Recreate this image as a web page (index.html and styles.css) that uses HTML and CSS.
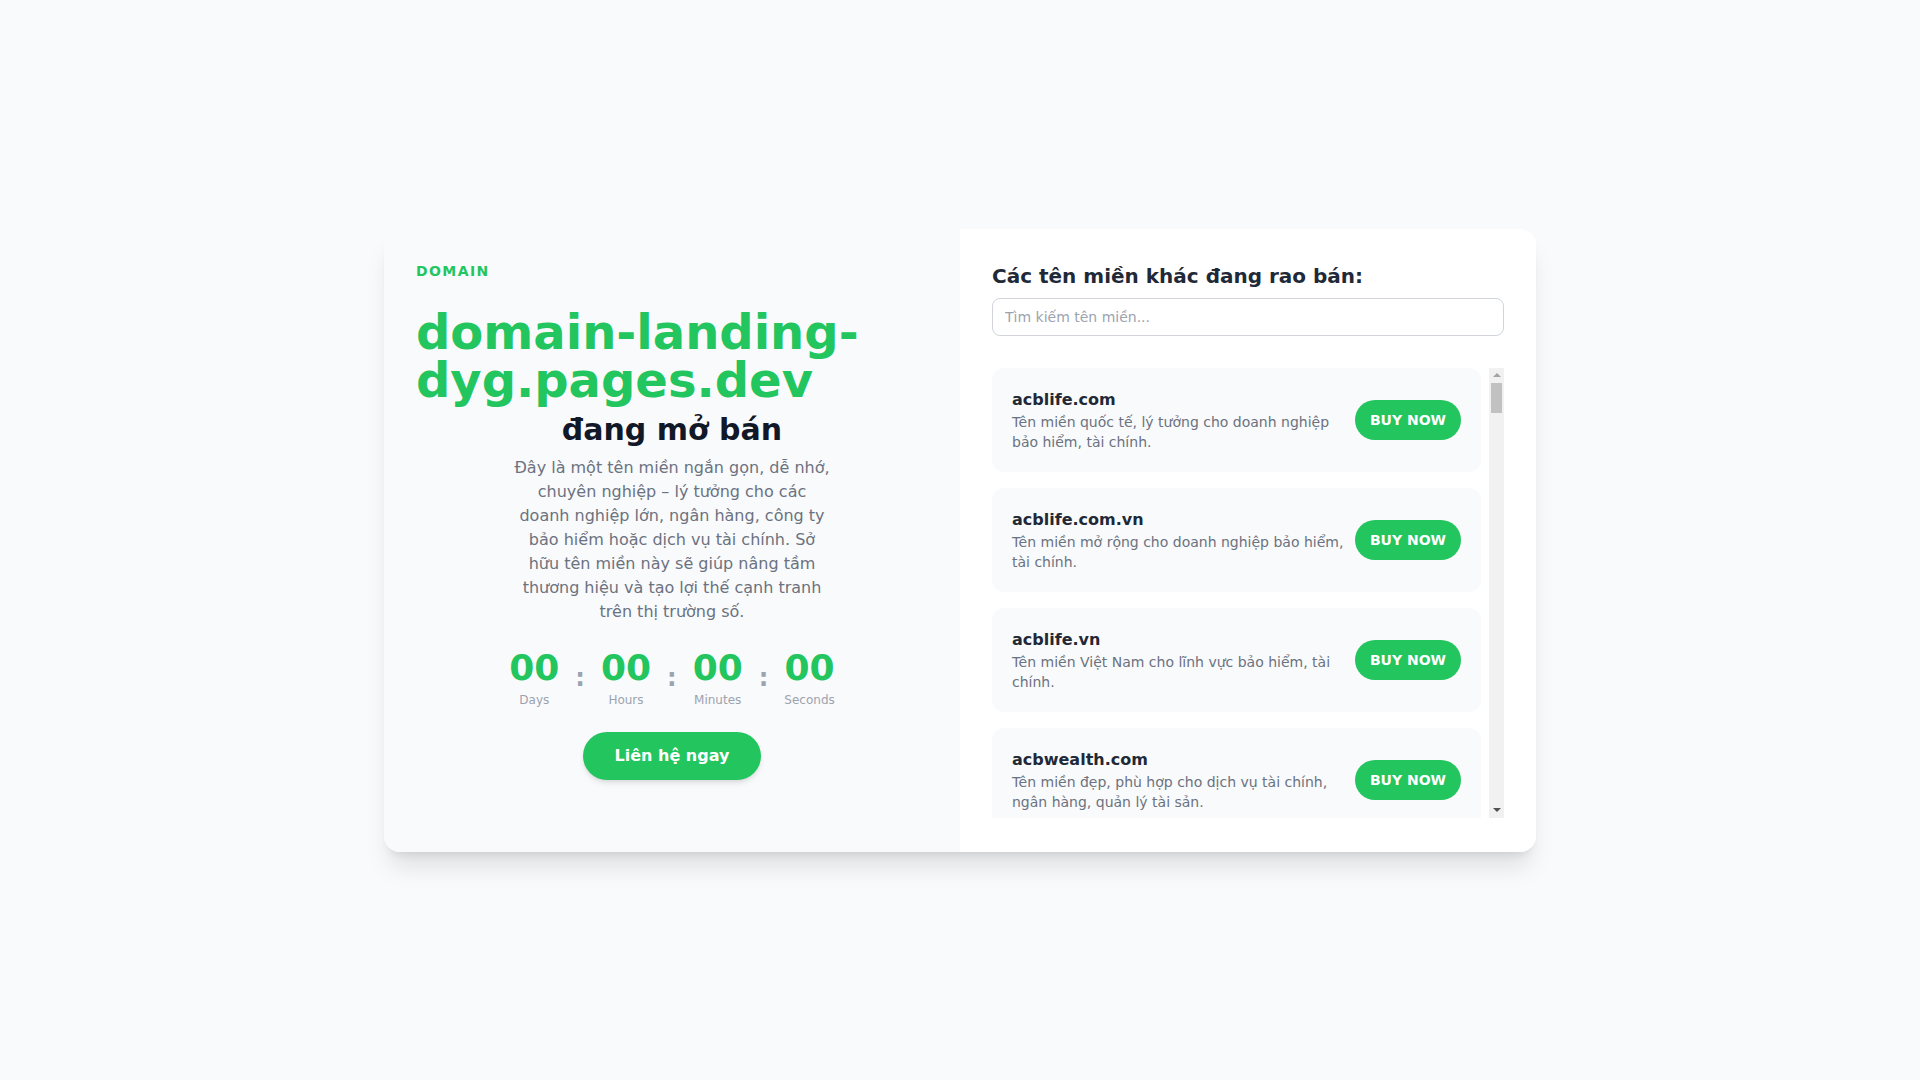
FILE: index.html
```html
<!DOCTYPE html>
<html lang="vi">
<head>
<meta charset="utf-8">
<title>domain-landing-dyg.pages.dev đang mở bán</title>
<link rel="stylesheet" href="styles.css">
</head>
<body>
<main class="card">
  <section class="intro">
    <div class="eyebrow">DOMAIN</div>
    <h1 class="domain-title">domain-landing-dyg.pages.dev</h1>
    <h2 class="subtitle">đang mở bán</h2>
    <p class="lead">Đây là một tên miền ngắn gọn, dễ nhớ, chuyên nghiệp – lý tưởng cho các doanh nghiệp lớn, ngân hàng, công ty bảo hiểm hoặc dịch vụ tài chính. Sở hữu tên miền này sẽ giúp nâng tầm thương hiệu và tạo lợi thế cạnh tranh trên thị trường số.</p>
    <div class="countdown">
      <div class="unit"><span class="num">00</span><span class="lbl">Days</span></div>
      <span class="sep">:</span>
      <div class="unit"><span class="num">00</span><span class="lbl">Hours</span></div>
      <span class="sep">:</span>
      <div class="unit"><span class="num">00</span><span class="lbl">Minutes</span></div>
      <span class="sep">:</span>
      <div class="unit"><span class="num">00</span><span class="lbl">Seconds</span></div>
    </div>
    <a class="contact-btn" href="#">Liên hệ ngay</a>
  </section>
  <section class="market">
    <h3 class="market-title">Các tên miền khác đang rao bán:</h3>
    <input class="search" type="text" placeholder="Tìm kiếm tên miền...">
    <div class="list-wrap">
      <div class="list">
        <div class="item"><div class="info"><div class="name">acblife.com</div><div class="desc">Tên miền quốc tế, lý tưởng cho doanh nghiệp bảo hiểm, tài chính.</div></div><a class="buy" href="#">BUY NOW</a></div>
        <div class="item"><div class="info"><div class="name">acblife.com.vn</div><div class="desc">Tên miền mở rộng cho doanh nghiệp bảo hiểm, tài chính.</div></div><a class="buy" href="#">BUY NOW</a></div>
        <div class="item"><div class="info"><div class="name">acblife.vn</div><div class="desc">Tên miền Việt Nam cho lĩnh vực bảo hiểm, tài chính.</div></div><a class="buy" href="#">BUY NOW</a></div>
        <div class="item"><div class="info"><div class="name">acbwealth.com</div><div class="desc">Tên miền đẹp, phù hợp cho dịch vụ tài chính, ngân hàng, quản lý tài sản.</div></div><a class="buy" href="#">BUY NOW</a></div>
        <div class="item"><div class="info"><div class="name">acbwealth.vn</div><div class="desc">Tên miền Việt Nam cho dịch vụ quản lý tài sản và đầu tư.</div></div><a class="buy" href="#">BUY NOW</a></div>
        <div class="item"><div class="info"><div class="name">acbwealth.com.vn</div><div class="desc">Tên miền mở rộng cho dịch vụ quản lý tài sản, ngân hàng.</div></div><a class="buy" href="#">BUY NOW</a></div>
        <div class="item"><div class="info"><div class="name">acbinsurance.com</div><div class="desc">Tên miền quốc tế cho doanh nghiệp bảo hiểm và tài chính.</div></div><a class="buy" href="#">BUY NOW</a></div>
        <div class="item"><div class="info"><div class="name">acbinsurance.vn</div><div class="desc">Tên miền Việt Nam cho công ty bảo hiểm nhân thọ, phi nhân thọ.</div></div><a class="buy" href="#">BUY NOW</a></div>
        <div class="item"><div class="info"><div class="name">acbcapital.com</div><div class="desc">Tên miền quốc tế cho quỹ đầu tư, công ty quản lý vốn.</div></div><a class="buy" href="#">BUY NOW</a></div>
        <div class="item"><div class="info"><div class="name">acbcapital.vn</div><div class="desc">Tên miền Việt Nam cho lĩnh vực đầu tư và quản lý vốn.</div></div><a class="buy" href="#">BUY NOW</a></div>
        <div class="item"><div class="info"><div class="name">acbinvest.com</div><div class="desc">Tên miền quốc tế cho nền tảng đầu tư, chứng khoán.</div></div><a class="buy" href="#">BUY NOW</a></div>
        <div class="item"><div class="info"><div class="name">acbinvest.vn</div><div class="desc">Tên miền Việt Nam cho dịch vụ đầu tư, tư vấn tài chính.</div></div><a class="buy" href="#">BUY NOW</a></div>
        <div class="item"><div class="info"><div class="name">acbfinance.com</div><div class="desc">Tên miền quốc tế cho công ty tài chính, cho vay tiêu dùng.</div></div><a class="buy" href="#">BUY NOW</a></div>
        <div class="item"><div class="info"><div class="name">acbfinance.vn</div><div class="desc">Tên miền Việt Nam cho lĩnh vực tài chính, tín dụng cá nhân.</div></div><a class="buy" href="#">BUY NOW</a></div>
        <div class="item"><div class="info"><div class="name">acbpay.vn</div><div class="desc">Tên miền ngắn gọn cho ví điện tử, cổng thanh toán trực tuyến.</div></div><a class="buy" href="#">BUY NOW</a></div>
        <div class="item"><div class="info"><div class="name">acbpay.com.vn</div><div class="desc">Tên miền mở rộng cho dịch vụ thanh toán, chuyển tiền số.</div></div><a class="buy" href="#">BUY NOW</a></div>
        <div class="item"><div class="info"><div class="name">acbbank.net</div><div class="desc">Tên miền quốc tế cho ngân hàng số, dịch vụ ngân hàng trực tuyến.</div></div><a class="buy" href="#">BUY NOW</a></div>
        <div class="item"><div class="info"><div class="name">acbcredit.vn</div><div class="desc">Tên miền Việt Nam cho dịch vụ tín dụng, thẻ tín dụng.</div></div><a class="buy" href="#">BUY NOW</a></div>
        <div class="item"><div class="info"><div class="name">acbloan.vn</div><div class="desc">Tên miền dễ nhớ cho dịch vụ cho vay, vay vốn kinh doanh.</div></div><a class="buy" href="#">BUY NOW</a></div>
        <div class="item"><div class="info"><div class="name">acbcard.vn</div><div class="desc">Tên miền Việt Nam cho dịch vụ phát hành thẻ, thanh toán.</div></div><a class="buy" href="#">BUY NOW</a></div>
        <div class="item"><div class="info"><div class="name">acbfund.com</div><div class="desc">Tên miền quốc tế cho quỹ mở, quỹ đầu tư chứng khoán.</div></div><a class="buy" href="#">BUY NOW</a></div>
        <div class="item"><div class="info"><div class="name">acbfund.vn</div><div class="desc">Tên miền Việt Nam cho công ty quản lý quỹ đầu tư.</div></div><a class="buy" href="#">BUY NOW</a></div>
        <div class="item"><div class="info"><div class="name">acbprivate.com</div><div class="desc">Tên miền quốc tế cho dịch vụ ngân hàng cá nhân cao cấp.</div></div><a class="buy" href="#">BUY NOW</a></div>
        <div class="item"><div class="info"><div class="name">acbprivate.vn</div><div class="desc">Tên miền Việt Nam cho khách hàng ưu tiên, tài sản lớn.</div></div><a class="buy" href="#">BUY NOW</a></div>
        <div class="item"><div class="info"><div class="name">acbpremier.vn</div><div class="desc">Tên miền sang trọng cho dịch vụ tài chính hạng thượng lưu.</div></div><a class="buy" href="#">BUY NOW</a></div>
        <div class="item"><div class="info"><div class="name">acbsecurities.vn</div><div class="desc">Tên miền Việt Nam cho công ty chứng khoán, môi giới.</div></div><a class="buy" href="#">BUY NOW</a></div>
        <div class="item"><div class="info"><div class="name">acbstock.vn</div><div class="desc">Tên miền ngắn gọn cho nền tảng giao dịch cổ phiếu.</div></div><a class="buy" href="#">BUY NOW</a></div>
        <div class="item"><div class="info"><div class="name">acbgold.vn</div><div class="desc">Tên miền Việt Nam cho dịch vụ kinh doanh vàng, kim loại quý.</div></div><a class="buy" href="#">BUY NOW</a></div>
        <div class="item"><div class="info"><div class="name">acbland.vn</div><div class="desc">Tên miền Việt Nam cho lĩnh vực bất động sản, đầu tư đất.</div></div><a class="buy" href="#">BUY NOW</a></div>
        <div class="item"><div class="info"><div class="name">acbhome.vn</div><div class="desc">Tên miền dễ nhớ cho dịch vụ vay mua nhà, nhà ở xã hội.</div></div><a class="buy" href="#">BUY NOW</a></div>
      </div>
      <div class="scrollbar" aria-hidden="true">
        <div class="sb-arrow sb-up"></div>
        <div class="sb-track"><div class="sb-thumb"></div></div>
        <div class="sb-arrow sb-down"></div>
      </div>
    </div>
  </section>
</main>
</body>
</html>
```

FILE: styles.css
```css
* {
  box-sizing: border-box;
}

html, body {
  margin: 0;
  padding: 0;
}

body {
  min-height: 100vh;
  background: #f9fafb;
  font-family: "DejaVu Sans", "Noto Sans", sans-serif;
  display: flex;
  align-items: center;
  justify-content: center;
}

.card {
  width: 1152px;
  display: grid;
  grid-template-columns: 1fr 1fr;
  border-radius: 16px;
  overflow: hidden;
  box-shadow: 0 20px 25px -5px rgba(0, 0, 0, 0.1), 0 8px 10px -6px rgba(0, 0, 0, 0.1);
}

/* Left side */
.intro {
  background: #f9fafb;
  padding: 32px;
}

.eyebrow {
  font-size: 14px;
  line-height: 20px;
  font-weight: 700;
  letter-spacing: 0.1em;
  color: #22c55e;
  margin-bottom: 27px;
}

.domain-title {
  margin: 0;
  font-size: 48px;
  line-height: 48px;
  font-weight: 700;
  color: #22c55e;
}

.subtitle {
  margin: 8px 0 0;
  text-align: center;
  font-size: 30px;
  line-height: 36px;
  font-weight: 700;
  color: #111827;
}

.lead {
  margin: 8px auto 0;
  max-width: 320px;
  text-align: center;
  font-size: 16px;
  line-height: 24px;
  color: #6b7280;
}

.countdown {
  margin-top: 24px;
  display: flex;
  justify-content: center;
  align-items: flex-start;
  gap: 16px;
}

.unit {
  display: flex;
  flex-direction: column;
  align-items: center;
}

.num {
  font-size: 36px;
  line-height: 40px;
  font-weight: 700;
  color: #22c55e;
}

.lbl {
  margin-top: 4px;
  font-size: 12px;
  line-height: 16px;
  color: #9ca3af;
}

.sep {
  margin-top: 14px;
  font-size: 24px;
  line-height: 32px;
  font-weight: 700;
  color: #9ca3af;
}

.contact-btn {
  display: table;
  margin: 24px auto 0;
  padding: 12px 32px;
  background: #22c55e;
  color: #ffffff;
  font-size: 16px;
  line-height: 24px;
  font-weight: 700;
  text-decoration: none;
  border-radius: 9999px;
  box-shadow: 0 4px 6px -1px rgba(0, 0, 0, 0.1), 0 2px 4px -2px rgba(0, 0, 0, 0.1);
}

/* Right side */
.market {
  background: #ffffff;
  padding: 32px 32px 34px;
}

.market-title {
  margin: 1px 0 8px;
  font-size: 20px;
  line-height: 28px;
  font-weight: 700;
  color: #1f2937;
}

.search {
  display: block;
  width: 100%;
  height: 38px;
  padding: 8px 12px;
  border: 1px solid #d1d5db;
  border-radius: 8px;
  font-family: inherit;
  font-size: 14px;
  line-height: 20px;
  color: #1f2937;
  background: #ffffff;
  outline: none;
}

.search::placeholder {
  color: #9ca3af;
}

.list-wrap {
  margin-top: 32px;
  height: 450px;
  display: flex;
}

.list {
  flex: 1;
  min-width: 0;
  overflow-y: auto;
  scrollbar-width: none;
  padding-right: 8px;
  display: flex;
  flex-direction: column;
  gap: 16px;
}

.item {
  flex-shrink: 0;
  display: flex;
  align-items: center;
  gap: 6px;
  padding: 20px;
  background: #f9fafb;
  border-radius: 12px;
}

.info {
  flex: 1;
  min-width: 0;
}

.name {
  font-size: 16px;
  line-height: 24px;
  font-weight: 700;
  color: #1f2937;
}

.desc {
  font-size: 14px;
  line-height: 20px;
  color: #6b7280;
}

.buy {
  flex-shrink: 0;
  padding: 10px 15px;
  background: #22c55e;
  color: #ffffff;
  font-size: 14px;
  line-height: 20px;
  font-weight: 700;
  text-decoration: none;
  border-radius: 9999px;
}

/* Classic scrollbar look */
.scrollbar {
  width: 15px;
  flex-shrink: 0;
  background: #f1f1f1;
  display: flex;
  flex-direction: column;
}

.sb-arrow {
  height: 15px;
  display: flex;
  align-items: center;
  justify-content: center;
}

.sb-arrow::before {
  content: "";
  width: 0;
  height: 0;
  border-left: 4px solid transparent;
  border-right: 4px solid transparent;
}

.sb-up::before {
  border-bottom: 4px solid #a3a3a3;
}

.sb-down::before {
  border-top: 4px solid #505050;
}

.sb-track {
  flex: 1;
  padding: 0 2px;
}

.sb-thumb {
  height: 30px;
  background: #c1c1c1;
}
```
